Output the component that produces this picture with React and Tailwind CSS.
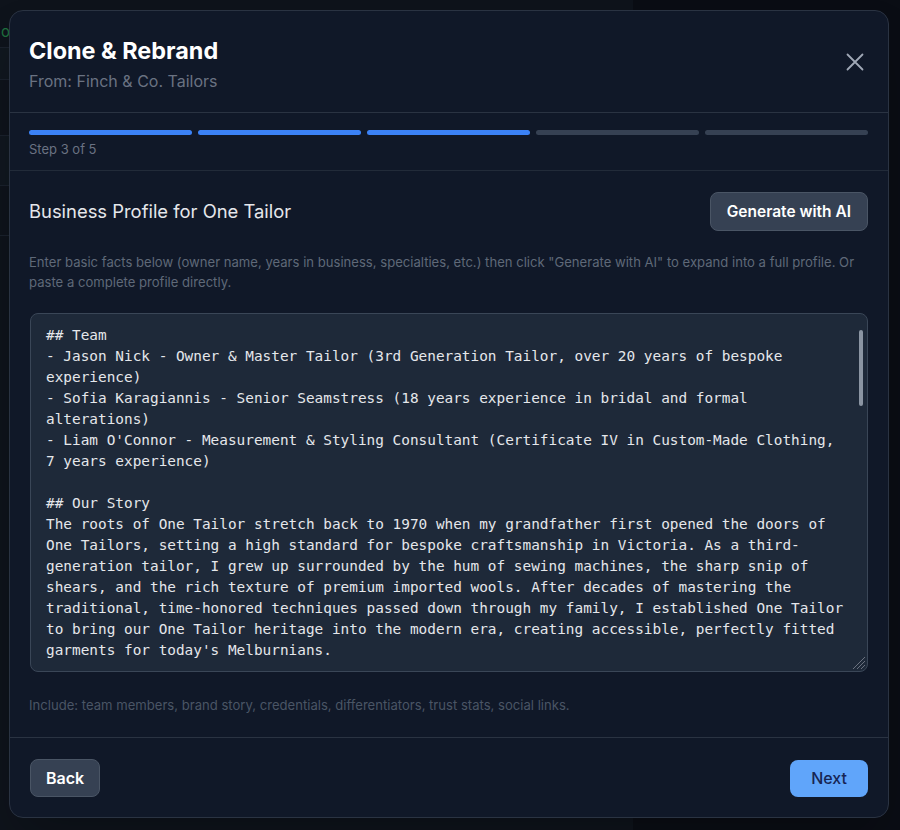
import React from "react";

const profileLines = [
  "## Team",
  "- Jason Nick - Owner & Master Tailor (3rd Generation Tailor, over 20 years of bespoke",
  "experience)",
  "- Sofia Karagiannis - Senior Seamstress (18 years experience in bridal and formal",
  "alterations)",
  "- Liam O'Connor - Measurement & Styling Consultant (Certificate IV in Custom-Made Clothing,",
  "7 years experience)",
  "",
  "## Our Story",
  "The roots of One Tailor stretch back to 1970 when my grandfather first opened the doors of",
  "One Tailors, setting a high standard for bespoke craftsmanship in Victoria. As a third-",
  "generation tailor, I grew up surrounded by the hum of sewing machines, the sharp snip of",
  "shears, and the rich texture of premium imported wools. After decades of mastering the",
  "traditional, time-honored techniques passed down through my family, I established One Tailor",
  "to bring our One Tailor heritage into the modern era, creating accessible, perfectly fitted",
  "garments for today's Melburnians.",
  "",
  "## Credentials",
  "- Certificate IV in Custom-Made Clothing",
  "- Member of the Australian Tailoring Guild",
];

const steps = [true, true, true, false, false];

function CloseIcon() {
  return (
    <svg width="18" height="18" viewBox="0 0 18 18" fill="none" aria-hidden="true">
      <path d="M1.5 1.5L16.5 16.5M16.5 1.5L1.5 16.5" stroke="currentColor" strokeWidth="1.8" strokeLinecap="round" />
    </svg>
  );
}

function ResizeGrip() {
  return (
    <svg width="16" height="16" viewBox="0 0 16 16" aria-hidden="true">
      <path d="M15 3L3 15M15 7L7 15M15 11L11 15" stroke="#6b7280" strokeWidth="1" />
    </svg>
  );
}

export default function App() {
  return (
    <div className="relative min-h-screen w-full bg-[#0a0d14]" style={{ fontFamily: "Inter, 'Liberation Sans', sans-serif" }}>
      {/* page behind the dialog */}
      <div className="absolute inset-y-0 left-0 w-[633px] bg-[#0e131b]">
        <div className="h-[48px] border-b border-[#1a212c] pl-[1px] pt-[24px] text-[15px] leading-none text-[#1f6f3e]">o</div>
        <div className="h-[32px] border-b border-[#1a212c] bg-[#10171f]" />
        <div className="h-[56px] border-b border-[#1a212c]" />
        <div className="h-[50px] border-b border-[#1a212c] bg-[#10171f]" />
        <div className="h-[50px] border-b border-[#1a212c]" />
      </div>

      <div className="relative flex min-h-screen items-start pl-[9px] pt-[10px]">
        <div className="flex w-[880px] flex-col rounded-[14px] border border-[#2a3342] bg-[#101828] shadow-2xl">
          {/* Header */}
          <div className="flex items-start justify-between border-b border-[#2a3342] pb-[19px] pl-[19px] pr-5 pt-6">
            <div>
              <h1 className="text-[23.4px] leading-8 font-bold text-white">Clone &amp; Rebrand</h1>
              <p className="mt-0.5 text-base leading-6 text-[#6a7282]">From: Finch &amp; Co. Tailors</p>
            </div>
            <button type="button" className="mr-[4px] mt-[18px] text-[#a0a8b6]">
              <CloseIcon />
            </button>
          </div>

          {/* Progress */}
          <div className="border-b border-[#222b39] pb-[11px] pl-[19px] pr-5 pt-[17px]">
            <div className="flex gap-1.5">
              {steps.map((done, i) => (
                <div
                  key={i}
                  className={`h-[5px] flex-1 rounded-full ${done ? "bg-[#3b82f6]" : "bg-[#364153]"}`}
                />
              ))}
            </div>
            <p className="mt-[4px] text-[13px] leading-5 text-[#6a7282]">Step 3 of 5</p>
          </div>

          {/* Body */}
          <div className="border-b border-[#2a3342] pb-[22px] pl-[19px] pr-5 pt-[21px]">
            <div className="flex items-center justify-between">
              <h2 className="text-[18.4px] font-normal text-[#e5e7eb]">Business Profile for One Tailor</h2>
              <button
                type="button"
                className="h-[39px] rounded-lg border border-[#4a5565] bg-[#364153] px-4 text-[15.5px] font-semibold text-white"
              >
                Generate with AI
              </button>
            </div>

            <p className="mt-[21px] text-[13.1px] leading-5 text-[#5f6978]">
              Enter basic facts below (owner name, years in business, specialties, etc.) then click "Generate with AI" to
              expand into a full profile. Or paste a complete profile directly.
            </p>

            <div className="relative ml-px mt-[21px] h-[359px] overflow-hidden rounded-lg border border-[#3a4657] bg-[#1e2939]">
              <div
                className="whitespace-pre px-[15px] py-[11px] text-[14.4px] leading-[21px] text-[#e5e7eb]"
                style={{ fontFamily: "'DejaVu Sans Mono', 'Liberation Mono', monospace" }}
              >
                {profileLines.map((line, i) => (
                  <div key={i}>{line === "" ? " " : line}</div>
                ))}
              </div>
              <div className="absolute right-[4px] top-[16px] h-[76px] w-[4px] rounded-full bg-[#8b95a3]" />
              <div className="absolute bottom-[1px] right-[1px]">
                <ResizeGrip />
              </div>
            </div>

            <p className="mt-[23px] text-[13.1px] leading-5 text-[#4a5565]">
              Include: team members, brand story, credentials, differentiators, trust stats, social links.
            </p>
          </div>

          {/* Footer */}
          <div className="flex items-center justify-between pb-5 pl-5 pr-5 pt-[21px]">
            <button
              type="button"
              className="h-[38px] rounded-lg border border-[#4a5565] bg-[#364153] px-[15px] text-base font-semibold text-white"
            >
              Back
            </button>
            <button
              type="button"
              className="h-[37px] rounded-lg bg-[#60a5fa] px-[21px] text-base font-medium text-[#172554]"
            >
              Next
            </button>
          </div>
        </div>
      </div>
    </div>
  );
}
